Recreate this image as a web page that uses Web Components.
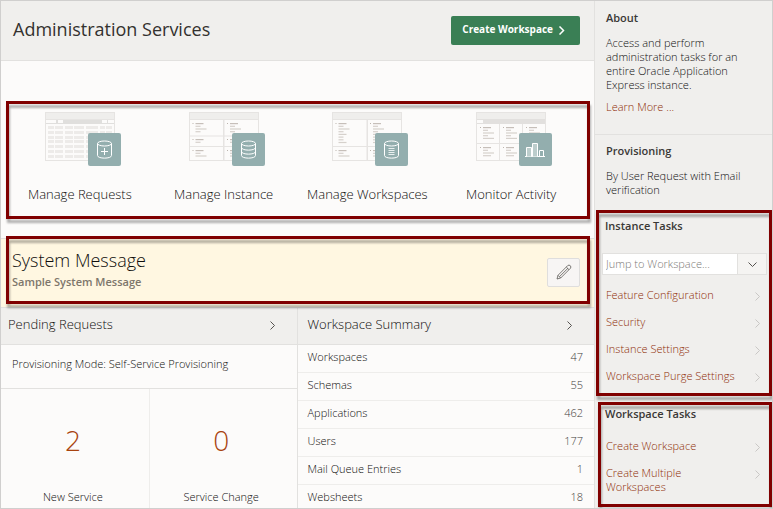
<!DOCTYPE html>
<html lang="en">
<head>
<meta charset="utf-8">
<meta name="viewport" content="width=device-width, initial-scale=1">
<title>Administration Services</title>
<style>
    :root {
        --color-bg: #fcfbfa;
        --color-bar: #f0efed;
        --color-line: #e2e1df;
        --color-line-soft: #eeedeb;
        --color-text: #0f0e0d;
        --color-link: #8f2c05;
        --color-callout: #800000;
    }

    body {
        margin: 0;
        background: var(--color-bg);
        color: var(--color-text);
        font: 300 11px/14px "Open Sans", "Noto Sans", sans-serif;
    }

    side-section a {
        color: var(--color-link);
        text-decoration: none;
    }
</style>
</head>
<body>

<admin-page>
    <page-header slot="header" heading="Administration Services">
        <action-button>Create Workspace</action-button>
    </page-header>

    <callout-frame slot="main" class="cards-frame">
        <card-list>
            <task-card kind="requests">Manage Requests</task-card>
            <task-card kind="instance">Manage Instance</task-card>
            <task-card kind="workspaces">Manage Workspaces</task-card>
            <task-card kind="activity">Monitor Activity</task-card>
        </card-list>
    </callout-frame>

    <callout-frame slot="main" class="message-frame">
        <system-message heading="System Message">Sample System Message</system-message>
    </callout-frame>

    <panel-row slot="main">
        <info-panel heading="Pending Requests">
            <pending-requests mode="Self-Service Provisioning"></pending-requests>
        </info-panel>
        <info-panel heading="Workspace Summary">
            <summary-table></summary-table>
        </info-panel>
    </panel-row>

    <side-section slot="aside" heading="About">
        <p>Access and perform administration tasks for an entire Oracle Application Express instance.</p>
        <p><a href="#learn-more">Learn More ...</a></p>
    </side-section>
    <side-section slot="aside" heading="Provisioning" class="plain">
        <p>By User Request with Email verification</p>
    </side-section>
    <callout-frame slot="aside" class="side-frame">
        <side-section heading="Instance Tasks" class="tasks">
            <workspace-picker></workspace-picker>
            <task-links items="Feature Configuration|Security|Instance Settings|Workspace Purge Settings"></task-links>
        </side-section>
    </callout-frame>
    <callout-frame slot="aside" class="side-frame last">
        <side-section heading="Workspace Tasks" class="tasks compact">
            <task-links items="Create Workspace|Create Multiple Workspaces"></task-links>
        </side-section>
    </callout-frame>
</admin-page>

<script>
const chevron = (size = 9) => `
    <svg class="chevron" width="${size}" height="${size}" viewBox="0 0 9 9" fill="none" stroke="currentColor" aria-hidden="true">
        <path d="M2.5 .5 6.5 4.5 2.5 8.5"/>
    </svg>`;

class BaseElement extends HTMLElement {
    connectedCallback() {
        if (this.shadowRoot) return;
        this.attachShadow({ mode: 'open' });
        this.shadowRoot.innerHTML = this.template();
    }

    get heading() {
        return this.getAttribute('heading') || '';
    }
}

// Page shell: header + main column on the left, task sidebar on the right
class AdminPage extends BaseElement {
    template() {
        return `
            <style>
                :host {
                    display: grid;
                    grid-template-columns: minmax(0, 1fr) 178px;
                    box-sizing: border-box;
                    min-height: 100vh;
                    border: 1px solid #d0cfce;
                    overflow: hidden;
                }
                .content { display: flex; flex-direction: column; }
                main { display: flex; flex-direction: column; flex: 1; }
                aside {
                    border-left: 1px solid var(--color-line);
                    background: var(--color-bar);
                }
                ::slotted(.cards-frame) {
                    --callout-inset: 0 4px 0 5px;
                    margin: 40px 0 19px;
                }
                ::slotted(.message-frame) {
                    --callout-inset: -3px 4px 3px 5px;
                    border-top: 1px solid var(--color-line);
                    border-bottom: 1px solid var(--color-line);
                }
                ::slotted(panel-row) { flex: 1; }
                ::slotted(.side-frame) { --callout-inset: 0 0 0 1px; }
                ::slotted(.last) {
                    --callout-inset: 0 0 0 3px;
                    margin-top: 6px;
                }
            </style>
            <div class="content">
                <slot name="header"></slot>
                <main><slot name="main"></slot></main>
            </div>
            <aside><slot name="aside"></slot></aside>
        `;
    }
}

class PageHeader extends BaseElement {
    template() {
        return `
            <style>
                :host {
                    display: flex;
                    align-items: center;
                    justify-content: space-between;
                    height: 59px;
                    padding: 0 14px 0 12px;
                    border-bottom: 1px solid var(--color-line);
                    background: var(--color-bar);
                }
                h1 {
                    margin: 0 0 3px;
                    color: #33312f;
                    font-size: 18px;
                    line-height: 24px;
                    font-weight: 500;
                }
            </style>
            <h1>${this.heading}</h1>
            <slot></slot>
        `;
    }
}

class ActionButton extends BaseElement {
    template() {
        return `
            <style>
                :host { display: block; }
                button {
                    display: flex;
                    align-items: center;
                    gap: 4px;
                    height: 29px;
                    padding: 0 14px 4px 11px;
                    border: 0;
                    border-radius: 2px;
                    background: #3a7f55;
                    color: #fff;
                    font: inherit;
                    font-weight: 700;
                    font-size: 10px;
                }
                .chevron { stroke-width: 1.5; margin-top: 4px; }
            </style>
            <button type="button"><slot></slot>${chevron()}</button>
        `;
    }
}

// Highlight box drawn over whatever it wraps
class CalloutFrame extends BaseElement {
    template() {
        return `
            <style>
                :host { display: block; position: relative; }
                :host::after {
                    content: "";
                    position: absolute;
                    inset: var(--callout-inset, 0);
                    z-index: 1;
                    border: 3px solid var(--color-callout);
                    filter: drop-shadow(1px 4px 1px rgba(0, 0, 0, .3));
                    pointer-events: none;
                }
            </style>
            <slot></slot>
        `;
    }
}

class CardList extends BaseElement {
    template() {
        return `
            <style>
                :host {
                    display: grid;
                    grid-template-columns: repeat(4, 1fr);
                    padding: 11px 11px 15px 7px;
                }
            </style>
            <slot></slot>
        `;
    }
}

const rect = (x, y, w, h, fill) => `<rect x="${x}" y="${y}" width="${w}" height="${h}" fill="${fill}"/>`;

// Short runs of "text" inside a thumbnail cell
const lines = (x, y, widths) => rect(x, y, 1, 1, '#bdb5ae') +
    widths.map((w, i) => rect(x + 3, y + i * 2.7, w, 1.2, i ? '#d6d1cc' : '#c6bfb9')).join('');

const thumbBase = rect(0, 0, 70, 49, '#e6e4e2') + rect(1, 1, 68, 6, '#efeeec') + rect(1, 8, 68, 40, '#fcfbfa');

const thumbs = {
    requests() {
        const cols = [[3, 6], [10, 8], [20, 8], [29, 10], [41, 12], [55, 5], [61, 6]];
        const rows = [14, 19, 24, 28, 33, 38, 43];
        return thumbBase + rect(1, 8, 68, 4, '#e0dfdd') +
            [[1, 10], [13, 5], [57, 5], [63, 6]].map(([x, w]) => rect(x, 8, w, 3, '#fcfbfa')).join('') +
            rows.map(y => cols.map(([x, w]) => rect(x, y, w, 3, '#edebe9')).join('')).join('');
    },
    instance() {
        return thumbBase + rect(34, 8, 1.5, 40, '#e6e4e2') + rect(1, 23.5, 68, 1, '#e6e4e2') + rect(1, 34, 68, 1, '#e6e4e2') +
            [3.5, 38].map(x => lines(x, 11, [8, 5, 11, 5]) + lines(x, 27, [8, 5]) + lines(x, 38, [8, 5, 11])).join('');
    },
    workspaces() {
        return thumbBase + rect(34.5, 8, 1.5, 40, '#e6e4e2') + rect(1, 34, 68, 1, '#e6e4e2') +
            [3.5, 38].map(x => lines(x, 11, [8, 5, 11, 5, 8, 5, 5, 8]) + lines(x, 38, [8, 5, 11])).join('');
    },
    activity() {
        return thumbBase + rect(1, 7, 68, 5, '#e2e0de') + rect(1, 8, 6, 3, '#fcfbfa') +
            rect(23, 12, 1, 36, '#e6e4e2') + rect(46, 12, 1, 36, '#e6e4e2') + rect(1, 31, 68, 1, '#e6e4e2') +
            [4, 27, 50].map(x => lines(x, 15, [8, 5, 11, 5, 11]) + lines(x, 35, [8, 5, 11, 8])).join('');
    }
};

const cylinder = '<ellipse cx="59.5" cy="31.5" rx="7" ry="2.5"/><path d="M52.5 31.5V43.5C52.5 47 66.5 47 66.5 43.5V31.5"/>';

const badges = {
    requests: cylinder + '<path d="M59.5 36v7M56 39.5h7"/>',
    instance: cylinder + '<path d="M52.5 35.5C52.5 39 66.5 39 66.5 35.5M52.5 39.5C52.5 43 66.5 43 66.5 39.5"/>',
    workspaces: cylinder + '<path stroke-width=".8" d="M56.5 36.5h6M56.5 38.5h6M56.5 40.5h6M56.5 42.5h6"/>',
    activity: '<path d="M49 44.5h20"/><path fill="#bccdcc" d="M50.5 44.5v-9h5v9M56.5 44.5v-13h5v13"/><path d="M63.5 44.5v-6h4v6"/>'
};

class TaskCard extends BaseElement {
    template() {
        const kind = this.getAttribute('kind');
        return `
            <style>
                :host { display: block; }
                a {
                    display: flex;
                    flex-direction: column;
                    align-items: center;
                    gap: 18px;
                    color: inherit;
                    font-size: 13px;
                    line-height: 20px;
                    text-decoration: none;
                    white-space: nowrap;
                }
                svg { overflow: visible; }
            </style>
            <a href="#${kind}">
                <svg width="70" height="54" viewBox="0 0 70 54" aria-hidden="true">
                    ${thumbs[kind]()}
                    <rect x="43" y="21" width="33" height="33" rx="2" fill="#93aeae"/>
                    <g fill="none" stroke="#fff">${badges[kind]}</g>
                </svg>
                <span><slot></slot></span>
            </a>
        `;
    }
}

class SystemMessage extends BaseElement {
    template() {
        return `
            <style>
                :host {
                    display: flex;
                    align-items: center;
                    justify-content: space-between;
                    padding: 9px 14px 11px 11px;
                    background: #fff7e1;
                }
                h2 {
                    margin: 0;
                    font-size: 18px;
                    line-height: 24px;
                    font-weight: 300;
                }
                p {
                    margin: 1px 0 5px;
                    color: #7d766b;
                    font-weight: 600;
                    line-height: 18px;
                }
                button {
                    display: flex;
                    align-items: center;
                    justify-content: center;
                    width: 33px;
                    height: 29px;
                    padding: 0;
                    border: 1px solid #dfdedd;
                    border-radius: 2px;
                    background: #f7f5f4;
                }
            </style>
            <div>
                <h2>${this.heading}</h2>
                <p><slot></slot></p>
            </div>
            <button type="button" aria-label="Edit system message">
                <svg width="16" height="16" viewBox="0 0 16 16" fill="none" stroke="#5d5a57" stroke-width=".8" stroke-linejoin="round">
                    <path d="M1 15 2 11.3 11.7 1.6Q13 .5 14.3 1.7 15.5 3 14.4 4.3L4.7 14ZM2 11.3 4.7 14M10.3 3 13 5.7M3.5 12.6 12 4.2"/>
                </svg>
            </button>
        `;
    }
}

class PanelRow extends BaseElement {
    template() {
        return `
            <style>
                :host { display: grid; grid-template-columns: 1fr 1fr; }
                ::slotted(:first-child) { border-right: 1px solid var(--color-line); }
            </style>
            <slot></slot>
        `;
    }
}

class InfoPanel extends BaseElement {
    template() {
        return `
            <style>
                :host { display: flex; flex-direction: column; }
                header {
                    display: flex;
                    align-items: center;
                    justify-content: space-between;
                    height: 36px;
                    padding: 0 20px 0 7px;
                    border-bottom: 1px solid var(--color-line);
                    background: var(--color-bar);
                }
                :host(:last-child) header { padding-left: 10px; }
                h2 {
                    margin: 0 0 4px;
                    font-size: 13px;
                    line-height: 20px;
                    font-weight: 300;
                }
                a { display: flex; margin-bottom: 2px; color: #55524f; }
                ::slotted(pending-requests) { flex: 1; }
            </style>
            <header>
                <h2>${this.heading}</h2>
                <a href="#details" aria-label="${this.heading}">${chevron()}</a>
            </header>
            <slot></slot>
        `;
    }
}

class PendingRequests extends BaseElement {
    template() {
        const stats = [['New Service', 2], ['Service Change', 0]];
        return `
            <style>
                :host { display: flex; flex-direction: column; }
                p {
                    margin: 0;
                    padding: 12px 11px 17px;
                    border-bottom: 1px solid var(--color-line);
                }
                ul {
                    display: grid;
                    grid-template-columns: 1fr 1fr;
                    flex: 1;
                    margin: 0;
                    padding: 0;
                    list-style: none;
                }
                li {
                    display: flex;
                    flex-direction: column;
                    align-items: center;
                    gap: 32px;
                    padding: 33px 4px 0 0;
                }
                li + li { border-left: 1px solid var(--color-line-soft); }
                a {
                    color: #a8430f;
                    font-size: 28px;
                    line-height: 36px;
                    text-decoration: none;
                }
            </style>
            <p>Provisioning Mode: ${this.getAttribute('mode')}</p>
            <ul>
                ${stats.map(([label, count]) => `<li><a href="#requests">${count}</a><span>${label}</span></li>`).join('')}
            </ul>
        `;
    }
}

class SummaryTable extends BaseElement {
    template() {
        const rows = [
            ['Workspaces', 47],
            ['Schemas', 55],
            ['Applications', 462],
            ['Users', 177],
            ['Mail Queue Entries', 1],
            ['Websheets', 18]
        ];
        return `
            <style>
                :host { display: block; }
                table { width: 100%; border-collapse: collapse; }
                th, td {
                    padding: 5px 11px 8px 10px;
                    border-bottom: 1px solid var(--color-line-soft);
                    font-weight: 300;
                    text-align: left;
                }
                td { color: #3f3d3a; text-align: right; }
                tr:last-child > * { padding-bottom: 3px; border-bottom: 0; }
            </style>
            <table>
                ${rows.map(([label, value]) => `<tr><th scope="row">${label}</th><td>${value}</td></tr>`).join('')}
            </table>
        `;
    }
}

class SideSection extends BaseElement {
    template() {
        return `
            <style>
                :host {
                    display: block;
                    padding: 10px 20px 20px 11px;
                    border-bottom: 1px solid var(--color-line);
                }
                :host(.plain) { padding-top: 9px; padding-bottom: 13px; border-bottom: 0; }
                :host(.tasks) { padding: 9px 5px 13px 7px; border-bottom: 0; }
                :host(.compact) { padding-top: 5px; }
                h2 {
                    margin: 0 0 11px;
                    color: #3a3836;
                    font-size: 11px;
                    line-height: 14px;
                    font-weight: 600;
                }
                :host(.tasks) h2 { margin: 0 3px 18px; }
                ::slotted(p) { margin: 0 0 8px; }
                ::slotted(p:last-child) { margin: 0; }
            </style>
            <h2>${this.heading}</h2>
            <slot></slot>
        `;
    }
}

class WorkspacePicker extends BaseElement {
    template() {
        return `
            <style>
                :host { display: flex; margin: 20px 0 13px; }
                input, button {
                    box-sizing: border-box;
                    height: 22px;
                    margin: 0;
                    border: 1px solid var(--color-line);
                    font: inherit;
                }
                input {
                    flex: 1;
                    min-width: 0;
                    padding: 0 3px 2px;
                    background: #fff;
                }
                input::placeholder { color: #7d7a77; opacity: 1; }
                button {
                    display: flex;
                    align-items: center;
                    justify-content: center;
                    width: 29px;
                    padding: 0;
                    border-left: 0;
                    background: #f5f4f2;
                    color: #55524f;
                }
                .chevron { transform: rotate(90deg); }
            </style>
            <input type="text" placeholder="Jump to Workspace..." aria-label="Jump to Workspace">
            <button type="button" aria-label="Show workspaces">${chevron()}</button>
        `;
    }
}

class TaskLinks extends BaseElement {
    template() {
        const items = this.getAttribute('items').split('|');
        return `
            <style>
                :host { display: block; }
                ul {
                    display: flex;
                    flex-direction: column;
                    gap: 13px;
                    margin: 0 5px 0 4px;
                    padding: 0;
                    list-style: none;
                }
                a {
                    display: flex;
                    justify-content: space-between;
                    color: var(--color-link);
                    text-decoration: none;
                }
                span { max-width: 132px; }
                .chevron { flex: none; margin-top: 4px; color: #c9c7c5; }
            </style>
            <ul>
                ${items.map(item => `<li><a href="#task"><span>${item}</span>${chevron()}</a></li>`).join('')}
            </ul>
        `;
    }
}

customElements.define('admin-page', AdminPage);
customElements.define('page-header', PageHeader);
customElements.define('action-button', ActionButton);
customElements.define('callout-frame', CalloutFrame);
customElements.define('card-list', CardList);
customElements.define('task-card', TaskCard);
customElements.define('system-message', SystemMessage);
customElements.define('panel-row', PanelRow);
customElements.define('info-panel', InfoPanel);
customElements.define('pending-requests', PendingRequests);
customElements.define('summary-table', SummaryTable);
customElements.define('side-section', SideSection);
customElements.define('workspace-picker', WorkspacePicker);
customElements.define('task-links', TaskLinks);
</script>
</body>
</html>
